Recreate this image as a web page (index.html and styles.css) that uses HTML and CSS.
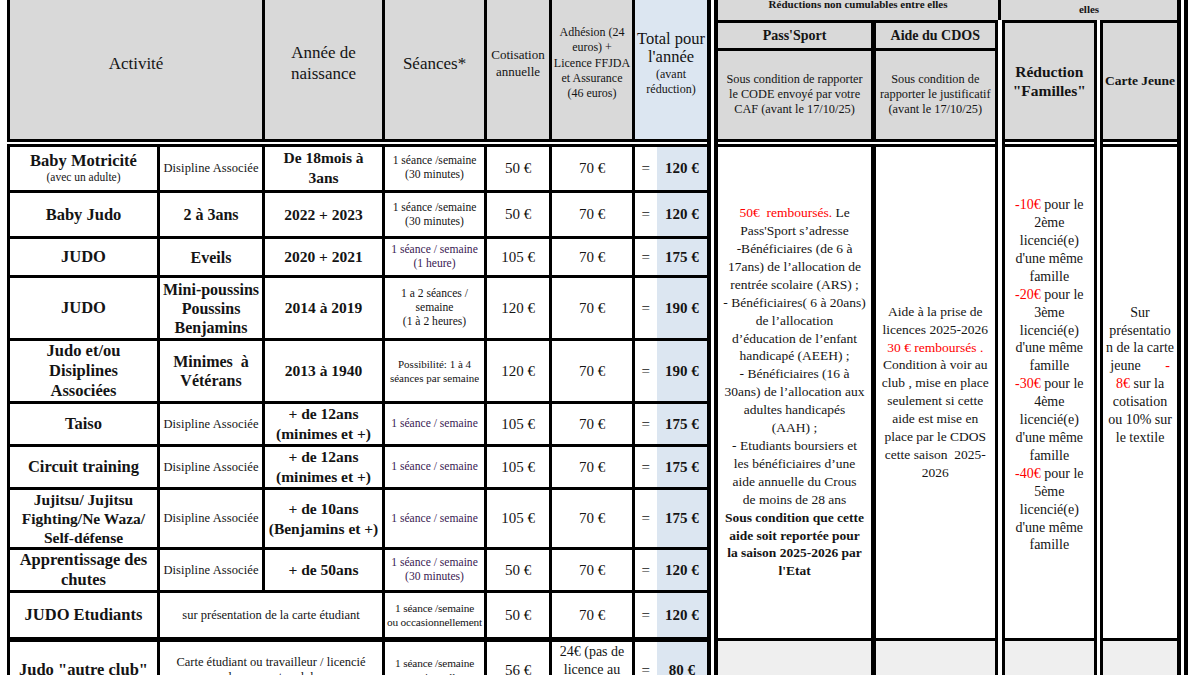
FILE: index.html
```html
<!DOCTYPE html>
<html lang="fr">
<head>
<meta charset="utf-8">
<title>Tarifs saison 2025-2026</title>
<link rel="stylesheet" href="styles.css">
</head>
<body>
<table class="tarifs">
  <colgroup>
    <col class="c-act">
    <col class="c-sub">
    <col class="c-year">
    <col class="c-ses">
    <col class="c-cot">
    <col class="c-adh">
    <col class="c-eq">
    <col class="c-tot">
    <col class="c-pass">
    <col class="c-cdos">
    <col class="c-fam">
    <col class="c-cj">
  </colgroup>
  <thead>
    <tr class="h1">
      <th colspan="2" rowspan="3" class="hd hb big">Activité</th>
      <th rowspan="3" class="hd hb big">Année de<br>naissance</th>
      <th rowspan="3" class="hd hb big">Séances*</th>
      <th rowspan="3" class="hd hb cot">Cotisation<br>annuelle</th>
      <th rowspan="3" class="hd hb adh">Adhésion (24<br>euros) +<br>Licence FFJDA<br>et Assurance<br>(46 euros)</th>
      <th colspan="2" rowspan="3" class="hd hb tot"><span class="tot-a">Total pour<br>l'année</span><span class="tot-b">(avant<br>réduction)</span></th>
      <th colspan="2" class="hd grp grp1">Réductions non cumulables entre elles</th>
      <th colspan="2" class="hd grp grp2">elles</th>
    </tr>
    <tr class="h2">
      <th class="hd sub pass">Pass'Sport</th>
      <th class="hd sub cdos">Aide du CDOS</th>
      <th rowspan="2" class="hd hb fam famh">Réduction<br>"Familles"</th>
      <th rowspan="2" class="hd hb cj cjh">Carte Jeune</th>
    </tr>
    <tr class="h3">
      <th class="hd hb cond pass">Sous condition de rapporter<br>le CODE envoyé par votre<br>CAF (avant le 17/10/25)</th>
      <th class="hd hb cond cdos">Sous condition de<br>rapporter le justificatif<br>(avant le 17/10/25)</th>
    </tr>
  </thead>
  <tbody>
    <tr class="b1">
      <td class="nm"><span class="l">Baby Motricité</span><span class="nm-s">(avec un adulte)</span></td>
      <td class="da">Disipline Associée</td>
      <td class="yr">De 18mois à<br>3ans</td>
      <td class="se">1 séance /semaine<br>(30 minutes)</td>
      <td class="px">50 €</td>
      <td class="px">70 €</td>
      <td class="eq">=</td>
      <td class="tv">120 €</td>
      <td rowspan="10" class="pass txt pass-b"><span class="red">50€&nbsp; remboursés.</span> Le<br>Pass'Sport s’adresse<br>-Bénéficiaires (de 6 à<br>17ans) de l’allocation de<br>rentrée scolaire (ARS) ;<br>- Bénéficiaires( 6 à 20ans)<br>de l’allocation<br>d’éducation de l’enfant<br>handicapé (AEEH) ;<br>- Bénéficiaires (16 à<br>30ans) de l’allocation aux<br>adultes handicapés<br>(AAH) ;<br>- Etudiants boursiers et<br>les bénéficiaires d’une<br>aide annuelle du Crous<br>de moins de 28 ans<br><b>Sous condition que cette<br>aide soit reportée pour<br>la saison 2025-2026 par<br>l'Etat</b></td>
      <td rowspan="10" class="cdos txt cdos-b">Aide à la prise de<br>licences 2025-2026<br><span class="red">30 € remboursés .</span><br>Condition à voir au<br>club , mise en place<br>seulement si cette<br>aide est mise en<br>place par le CDOS<br>cette saison&nbsp; 2025-<br>2026</td>
      <td rowspan="10" class="fam txt fam-b"><span class="red">-10€</span> pour le<br>2ème<br>licencié(e)<br>d'une même<br>famille<br><span class="red">-20€</span> pour le<br>3ème<br>licencié(e)<br>d'une même<br>famille<br><span class="red">-30€</span> pour le<br>4ème<br>licencié(e)<br>d'une même<br>famille<br><span class="red">-40€</span> pour le<br>5ème<br>licencié(e)<br>d'une même<br>famille</td>
      <td rowspan="10" class="cj txt cj-b">Sur<br>présentatio<br>n de la carte<br>jeune&nbsp;&nbsp;&nbsp;&nbsp;&nbsp;&nbsp;&nbsp;<span class="red">-</span><br><span class="red">8€</span> sur la<br>cotisation<br>ou 10% sur<br>le textile</td>
    </tr>
    <tr class="b2">
      <td class="nm">Baby Judo</td>
      <td class="sb">2 à 3ans</td>
      <td class="yr">2022 + 2023</td>
      <td class="se">1 séance /semaine<br>(30 minutes)</td>
      <td class="px">50 €</td>
      <td class="px">70 €</td>
      <td class="eq">=</td>
      <td class="tv">120 €</td>
    </tr>
    <tr class="b3">
      <td class="nm">JUDO</td>
      <td class="sb">Eveils</td>
      <td class="yr">2020 + 2021</td>
      <td class="se pur">1 séance / semaine<br>(1 heure)</td>
      <td class="px">105 €</td>
      <td class="px">70 €</td>
      <td class="eq">=</td>
      <td class="tv">175 €</td>
    </tr>
    <tr class="b4">
      <td class="nm">JUDO</td>
      <td class="sb">Mini-poussins<br>Poussins<br>Benjamins</td>
      <td class="yr">2014 à 2019</td>
      <td class="se">1 a 2 séances /<br>semaine<br>(1 à 2 heures)</td>
      <td class="px">120 €</td>
      <td class="px">70 €</td>
      <td class="eq">=</td>
      <td class="tv">190 €</td>
    </tr>
    <tr class="b5">
      <td class="nm nm3">Judo et/ou<br>Disiplines<br>Associées</td>
      <td class="sb">Minimes&nbsp; à<br>Vétérans</td>
      <td class="yr">2013 à 1940</td>
      <td class="se se-p">Possibilité: 1 à 4<br>séances par semaine</td>
      <td class="px">120 €</td>
      <td class="px">70 €</td>
      <td class="eq">=</td>
      <td class="tv">190 €</td>
    </tr>
    <tr class="b6">
      <td class="nm">Taiso</td>
      <td class="da">Disipline Associée</td>
      <td class="yr">+ de 12ans<br>(minimes et +)</td>
      <td class="se pur">1 séance / semaine</td>
      <td class="px">105 €</td>
      <td class="px">70 €</td>
      <td class="eq">=</td>
      <td class="tv">175 €</td>
    </tr>
    <tr class="b7">
      <td class="nm">Circuit training</td>
      <td class="da">Disipline Associée</td>
      <td class="yr">+ de 12ans<br>(minimes et +)</td>
      <td class="se pur">1 séance / semaine</td>
      <td class="px">105 €</td>
      <td class="px">70 €</td>
      <td class="eq">=</td>
      <td class="tv">175 €</td>
    </tr>
    <tr class="b8">
      <td class="nm nm-j">Jujitsu/ Jujitsu<br>Fighting/Ne Waza/<br>Self-défense</td>
      <td class="da">Disipline Associée</td>
      <td class="yr">+ de 10ans<br>(Benjamins et +)</td>
      <td class="se pur">1 séance / semaine</td>
      <td class="px">105 €</td>
      <td class="px">70 €</td>
      <td class="eq">=</td>
      <td class="tv">175 €</td>
    </tr>
    <tr class="b9">
      <td class="nm nm2">Apprentissage des<br>chutes</td>
      <td class="da">Disipline Associée</td>
      <td class="yr">+ de 50ans</td>
      <td class="se pur">1 séance / semaine<br>(30 minutes)</td>
      <td class="px">50 €</td>
      <td class="px">70 €</td>
      <td class="eq">=</td>
      <td class="tv">120 €</td>
    </tr>
    <tr class="b10">
      <td class="nm">JUDO Etudiants</td>
      <td colspan="2" class="note">sur présentation de la carte étudiant</td>
      <td class="se se-o">1 séance /semaine<br>ou occasionnellement</td>
      <td class="px">50 €</td>
      <td class="px">70 €</td>
      <td class="eq">=</td>
      <td class="tv">120 €</td>
    </tr>
    <tr class="b11">
      <td class="nm">Judo "autre club"</td>
      <td colspan="2" class="note">Carte étudiant ou travailleur / licencié<br>dans un autre club</td>
      <td class="se se-o">1 séance /semaine<br>ou occasionnellement</td>
      <td class="px">56 €</td>
      <td class="px px3">24€ (pas de<br>licence au<br>club)</td>
      <td class="eq">=</td>
      <td class="tv">80 €</td>
      <td class="pass gray"></td>
      <td class="cdos gray"></td>
      <td class="fam gray"></td>
      <td class="cj gray"></td>
    </tr>
  </tbody>
</table>
</body>
</html>
```

FILE: styles.css
```css
html, body {
  margin: 0;
  padding: 0;
  background: #ffffff;
}

body {
  font-family: "Liberation Serif", "Times New Roman", serif;
  color: #141414;
  overflow: hidden;
  width: 1200px;
  height: 675px;
}

.tarifs {
  border-collapse: collapse;
  table-layout: fixed;
  width: 1174px;
  margin: -15px 0 0 7px;
}

.tarifs th,
.tarifs td {
  border: 3px solid #000;
  padding: 0 1px;
  text-align: center;
  vertical-align: middle;
  white-space: nowrap;
  overflow: hidden;
  font-weight: normal;
}

/* column widths */
.c-act { width: 150px; }
.c-sub { width: 105px; }
.c-year { width: 120px; }
.c-ses { width: 102px; }
.c-cot { width: 65px; }
.c-adh { width: 83px; }
.c-eq { width: 23px; }
.c-tot { width: 56px; }
.c-pass { width: 161px; }
.c-cdos { width: 126px; }
.c-fam { width: 99px; }
.c-cj { width: 84px; }

/* row heights */
.h1 { height: 35px; }
.h2 { height: 28px; }
.h3 { height: 93px; }
.b1 { height: 49px; }
.b2 { height: 46px; }
.b3 { height: 39px; }
.b4 { height: 63px; }
.b5 { height: 63px; }
.b6 { height: 40px; }
.b7 { height: 42px; }
.b8 { height: 58px; }
.b9 { height: 42px; }
.b10 { height: 48px; }
.b11 { height: 60px; }

/* header */
.hd {
  background: #d9d9d9;
}

.tarifs .hb {
  border-bottom: 8px double #000;
}

.big {
  font-size: 17px;
  line-height: 21px;
}

.cot {
  font-size: 13px;
  line-height: 17px;
}

.adh {
  font-size: 12px;
  line-height: 15.3px;
}

.tarifs .tot {
  background: #dce6f1;
  border-right: 11px double #000;
  padding: 0;
}

.tot-a {
  display: block;
  font-size: 16.5px;
  line-height: 18.5px;
}

.tot-b {
  display: block;
  font-size: 12px;
  line-height: 15px;
}

.grp {
  font-size: 11px;
  font-weight: bold !important;
  line-height: 13px;
}

.grp1 {
  vertical-align: middle;
}

.tarifs .grp2 {
  vertical-align: bottom;
  padding-bottom: 4px;
  border-right: 11px double #000;
}

.sub {
  font-size: 14px;
  font-weight: bold !important;
}

.cond {
  font-size: 12.3px;
  line-height: 15px;
}

.famh {
  font-size: 15.5px;
  line-height: 19px;
  font-weight: bold !important;
}

.cjh {
  font-size: 13.5px;
  font-weight: bold !important;
}

/* right-side column borders */
.tarifs .pass {
  border-left: 11px double #000;
  border-right: 5px solid #000;
}

.tarifs .cdos {
  border-right: 10px double #000;
}

.tarifs .fam {
  border-right: 9px double #000;
}

.tarifs .cj {
  border-right: 11px double #000;
}

/* body cells */
.nm {
  font-size: 16.5px;
  font-weight: bold !important;
  line-height: 20px;
}

.nm .l {
  display: block;
  line-height: 18px;
}

.nm-s {
  display: block;
  font-size: 11.5px;
  font-weight: normal;
  line-height: 14px;
}

.nm3 {
  line-height: 20px;
}

.nm-j {
  font-size: 15.5px;
  line-height: 19px;
}

.sb {
  font-size: 16px;
  font-weight: bold !important;
  line-height: 19px;
}

.da {
  font-size: 12.5px;
  letter-spacing: 0.1px;
}

.yr {
  font-size: 15.5px;
  font-weight: bold !important;
  line-height: 20px;
}

.se {
  font-size: 11.6px;
  line-height: 14px;
}

.se-p {
  font-size: 11px;
}

.tarifs .se-o {
  font-size: 11.3px;
  letter-spacing: -0.15px;
  padding: 0;
}

.pur {
  color: #3a2152;
}

.px {
  font-size: 15px;
}

.px3 {
  font-size: 14px;
  line-height: 18px;
}

.note {
  font-size: 12.5px;
  line-height: 15px;
}

.tarifs .eq {
  border-right: 0;
  font-size: 15px;
  padding: 0;
}

.tarifs .tv {
  border-left: 0;
  background: #dce6f1;
  font-size: 15px;
  font-weight: bold !important;
  border-right: 11px double #000;
  padding: 0;
}

.b10 td,
.b10 th {
  border-bottom-width: 5px !important;
}

.txt {
  font-size: 13.5px;
  line-height: 17.9px;
}

.fam-b,
.cj-b {
  font-size: 14px;
  padding-bottom: 34px !important;
}

.red {
  color: #ff0000;
}

.gray {
  background: #efefef;
}
```
